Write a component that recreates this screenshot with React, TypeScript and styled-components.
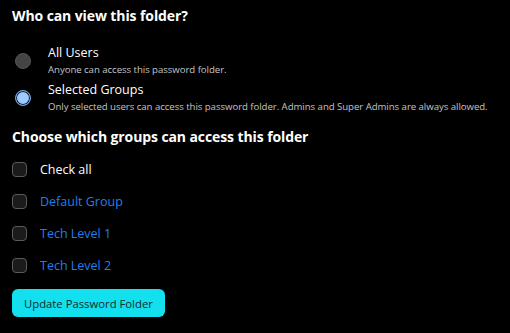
import { FC } from "react";
import styled, { createGlobalStyle } from "styled-components";

const GlobalStyle = createGlobalStyle`
    html, body {
        margin: 0;
        padding: 0;
        background: #000;
    }
    body {
        font-family: "Open Sans", "Noto Sans", sans-serif;
        color: #fff;
    }
`;

const Page = styled.div`
    width: 510px;
    height: 333px;
    box-sizing: border-box;
    padding: 6px 12px 0;
    background: #000;
`;

const Heading = styled.h3`
    margin: 0;
    font-size: 14px;
    font-weight: 700;
    line-height: 20px;
    letter-spacing: -0.1px;
`;

const RadioList = styled.div`
    display: flex;
    flex-direction: column;
    gap: 4px;
    margin: 18px 0 0 4px;
`;

const RadioRow = styled.label`
    display: flex;
    align-items: center;
    gap: 17px;
`;

const RadioDot = styled.span<{ $checked?: boolean }>`
    flex: none;
    width: 14px;
    height: 14px;
    margin-left: -1px;
    border-radius: 50%;
    border: 1.5px solid ${(p) => (p.$checked ? "#6f9fd8" : "#555")};
    background: ${(p) => (p.$checked ? "#9ecbff" : "#444")};
    box-shadow: ${(p) => (p.$checked ? "inset 0 0 0 1px #0b1320" : "none")};
`;

const RadioText = styled.div`
    display: flex;
    flex-direction: column;
`;

const RadioLabel = styled.span`
    font-size: 12.5px;
    line-height: 18px;
`;

const RadioHint = styled.span`
    font-size: 9.65px;
    line-height: 15px;
    color: #c4c4c4;
    letter-spacing: -0.05px;
`;

const SubHeading = styled(Heading)`
    margin-top: 13px;
`;

const CheckList = styled.ul`
    list-style: none;
    margin: 6px 0 0;
    padding: 0;
    display: flex;
    flex-direction: column;
`;

const CheckRow = styled.li`
    display: flex;
    align-items: center;
    height: 32px;
    gap: 13px;
`;

const Box = styled.span`
    flex: none;
    width: 13px;
    height: 13px;
    border: 1.5px solid #5a5a5a;
    border-radius: 4px;
    background: #1b1b1b;
`;

const CheckLabel = styled.span<{ $link?: boolean }>`
    font-size: 12.5px;
    color: ${(p) => (p.$link ? "#1f7ff0" : "#fff")};
`;

const Button = styled.button`
    margin-top: 8px;
    height: 28px;
    padding: 0 12px;
    border: none;
    border-radius: 6px;
    background: #12e0ef;
    color: #122a2a;
    font-family: "Open Sans", "Noto Sans", sans-serif;
    font-size: 11.3px;
`;

const groups = ["Default Group", "Tech Level 1", "Tech Level 2"];

const App: FC = () => {
    return (
        <Page>
            <GlobalStyle />
            <Heading>Who can view this folder?</Heading>
            <RadioList>
                <RadioRow>
                    <RadioDot />
                    <RadioText>
                        <RadioLabel>All Users</RadioLabel>
                        <RadioHint>Anyone can access this password folder.</RadioHint>
                    </RadioText>
                </RadioRow>
                <RadioRow>
                    <RadioDot $checked />
                    <RadioText>
                        <RadioLabel>Selected Groups</RadioLabel>
                        <RadioHint>
                            Only selected users can access this password folder. Admins and Super Admins are always allowed.
                        </RadioHint>
                    </RadioText>
                </RadioRow>
            </RadioList>
            <SubHeading>Choose which groups can access this folder</SubHeading>
            <CheckList>
                <CheckRow>
                    <Box />
                    <CheckLabel>Check all</CheckLabel>
                </CheckRow>
                {groups.map((g) => (
                    <CheckRow key={g}>
                        <Box />
                        <CheckLabel $link>{g}</CheckLabel>
                    </CheckRow>
                ))}
            </CheckList>
            <Button>Update Password Folder</Button>
        </Page>
    );
};

export default App;
